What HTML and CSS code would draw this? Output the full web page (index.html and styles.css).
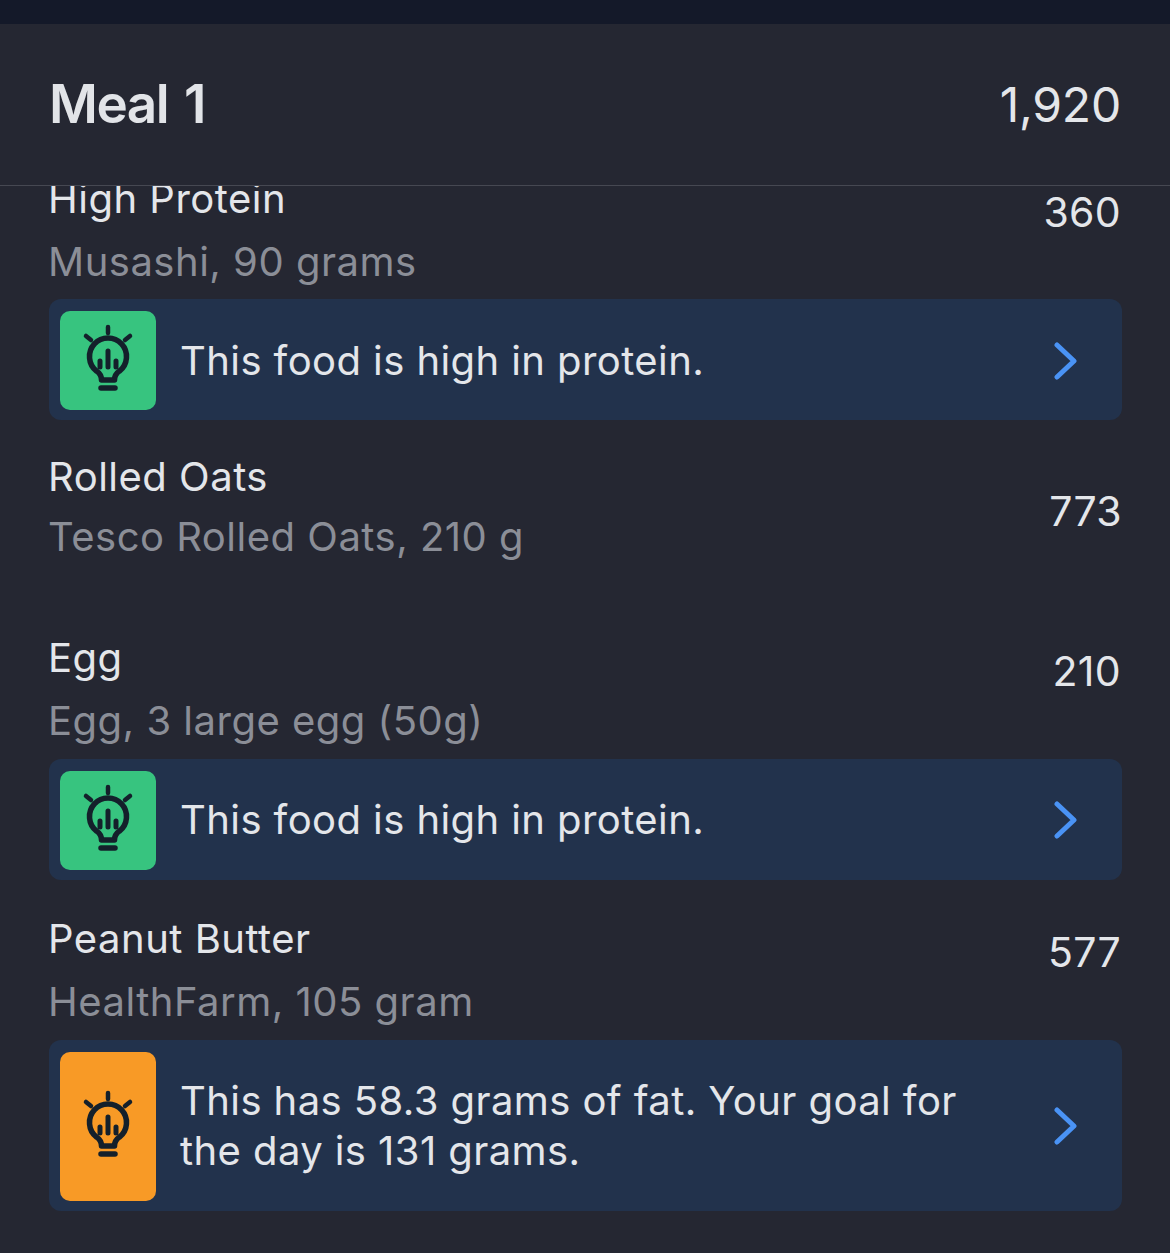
FILE: index.html
```html
<!DOCTYPE html>
<html lang="en">
<head>
    <meta charset="UTF-8">
    <meta name="viewport" content="width=device-width, initial-scale=1.0">
    <link rel="stylesheet" href="styles.css">
    <title>Meal 1</title>
</head>
<body>
    <svg class="defs" width="0" height="0">
        <symbol id="bulb" viewBox="0 0 96 99">
            <g fill="none" stroke="#14202b" stroke-linecap="round">
                <path stroke-width="4.500" d="M48 16v6M26 25l5 4M70 25l-5 4"/>
                <path stroke-width="5.500" stroke-linejoin="round" d="M41.500 69c0-5-2-7-5-9a18.500 18.500 0 1 1 23 0c-3 2-5 4-5 9z"/>
                <path stroke-width="5.500" d="M41 77h14"/>
                <path stroke-width="5" d="M48 40v16M40 50v6M56 50v6"/>
            </g>
        </symbol>
        <symbol id="chevron" viewBox="0 0 24 38">
            <path fill="none" stroke="#4a93f5" stroke-width="5" stroke-linecap="round" stroke-linejoin="round" d="M3 3l17 16L3 35"/>
        </symbol>
    </svg>

    <div class="topbar"></div>

    <div class="meal-header">
        <h2>Meal 1</h2>
        <span class="meal-total">1,920</span>
    </div>

    <div class="food-list">
        <div class="food food-clipped">
            <div class="food-row">
                <div>
                    <div class="food-name">High Protein</div>
                    <div class="food-detail">Musashi, 90 grams</div>
                </div>
                <div class="food-cals">360</div>
            </div>
            <div class="tip">
                <div class="tip-icon green"><svg width="96" height="99"><use href="#bulb"/></svg></div>
                <div class="tip-text">This food is high in protein.</div>
                <svg class="tip-arrow" width="24" height="38"><use href="#chevron"/></svg>
            </div>
        </div>

        <div class="food food-plain">
            <div class="food-row">
                <div>
                    <div class="food-name">Rolled Oats</div>
                    <div class="food-detail">Tesco Rolled Oats, 210 g</div>
                </div>
                <div class="food-cals">773</div>
            </div>
        </div>

        <div class="food">
            <div class="food-row">
                <div>
                    <div class="food-name">Egg</div>
                    <div class="food-detail">Egg, 3 large egg (50g)</div>
                </div>
                <div class="food-cals">210</div>
            </div>
            <div class="tip">
                <div class="tip-icon green"><svg width="96" height="99"><use href="#bulb"/></svg></div>
                <div class="tip-text">This food is high in protein.</div>
                <svg class="tip-arrow" width="24" height="38"><use href="#chevron"/></svg>
            </div>
        </div>

        <div class="food">
            <div class="food-row">
                <div>
                    <div class="food-name">Peanut Butter</div>
                    <div class="food-detail">HealthFarm, 105 gram</div>
                </div>
                <div class="food-cals">577</div>
            </div>
            <div class="tip">
                <div class="tip-icon orange tip-icon-tall"><svg width="96" height="99"><use href="#bulb"/></svg></div>
                <div class="tip-text">This has 58.3 grams of fat. Your goal for<br>the day is 131 grams.</div>
                <svg class="tip-arrow" width="24" height="38"><use href="#chevron"/></svg>
            </div>
        </div>
    </div>
</body>
</html>
```

FILE: styles.css
```css
html,
body {
    margin: 0;
    height: 1253px;
    overflow: hidden;
}

body {
    font-family: Inter, "Noto Sans", sans-serif;
    background-color: #252732;
    color: #e4e6ea;
}

.defs {
    display: block;
    height: 0;
}

.topbar {
    height: 24px;
    background-color: #141929;
}

.meal-header {
    display: flex;
    align-items: center;
    justify-content: space-between;
    height: 162px;
    padding: 0 49px 1px 49px;
    box-sizing: border-box;
    border-bottom: 1px solid #464852;
}

.meal-header h2 {
    margin: 0;
    font-size: 53px;
    font-weight: 600;
    letter-spacing: -1.5px;
    word-spacing: 4px;
    color: #e2e4e8;
}

.meal-total {
    font-size: 48px;
    font-weight: 400;
    letter-spacing: -0.2px;
}

.food-list {
    height: 1067px;
    overflow: hidden;
}

.food {
    margin: 0 48px 27.500px 49px;
}

.food-clipped {
    margin-top: -19.500px;
}

.food-plain {
    margin-top: -1px;
    margin-bottom: 59.500px;
}

.food-row {
    display: flex;
    justify-content: space-between;
    margin-left: -1px;
}

.food-name,
.food-detail {
    font-size: 40px;
    line-height: 63px;
    letter-spacing: 0.5px;
    white-space: nowrap;
}

.food-plain .food-name,
.food-plain .food-detail {
    line-height: 60px;
}

.food-detail {
    color: #8b8e97;
}

.food-cals {
    padding-top: 14px;
    padding-right: 1px;
    font-size: 41px;
    line-height: 63px;
    letter-spacing: 0.3px;
}

.food-plain .food-cals {
    padding-top: 33px;
    padding-right: 0;
}

.tip {
    display: flex;
    align-items: stretch;
    margin-top: 6.500px;
    padding: 12px 44px 10px 11px;
    background-color: #22324c;
    border-radius: 12px;
}

.tip-icon {
    display: flex;
    align-items: center;
    justify-content: center;
    width: 96px;
    height: 99px;
    flex-shrink: 0;
    border-radius: 10px;
}

.tip-icon-tall {
    height: 149px;
}

.green {
    background-color: #37c47f;
}

.orange {
    background-color: #f89a26;
}

.tip-text {
    flex: 1;
    align-self: center;
    margin-left: 24px;
    font-size: 40px;
    line-height: 50px;
    letter-spacing: 0.42px;
}

.tip-arrow {
    align-self: center;
    flex-shrink: 0;
}
```
